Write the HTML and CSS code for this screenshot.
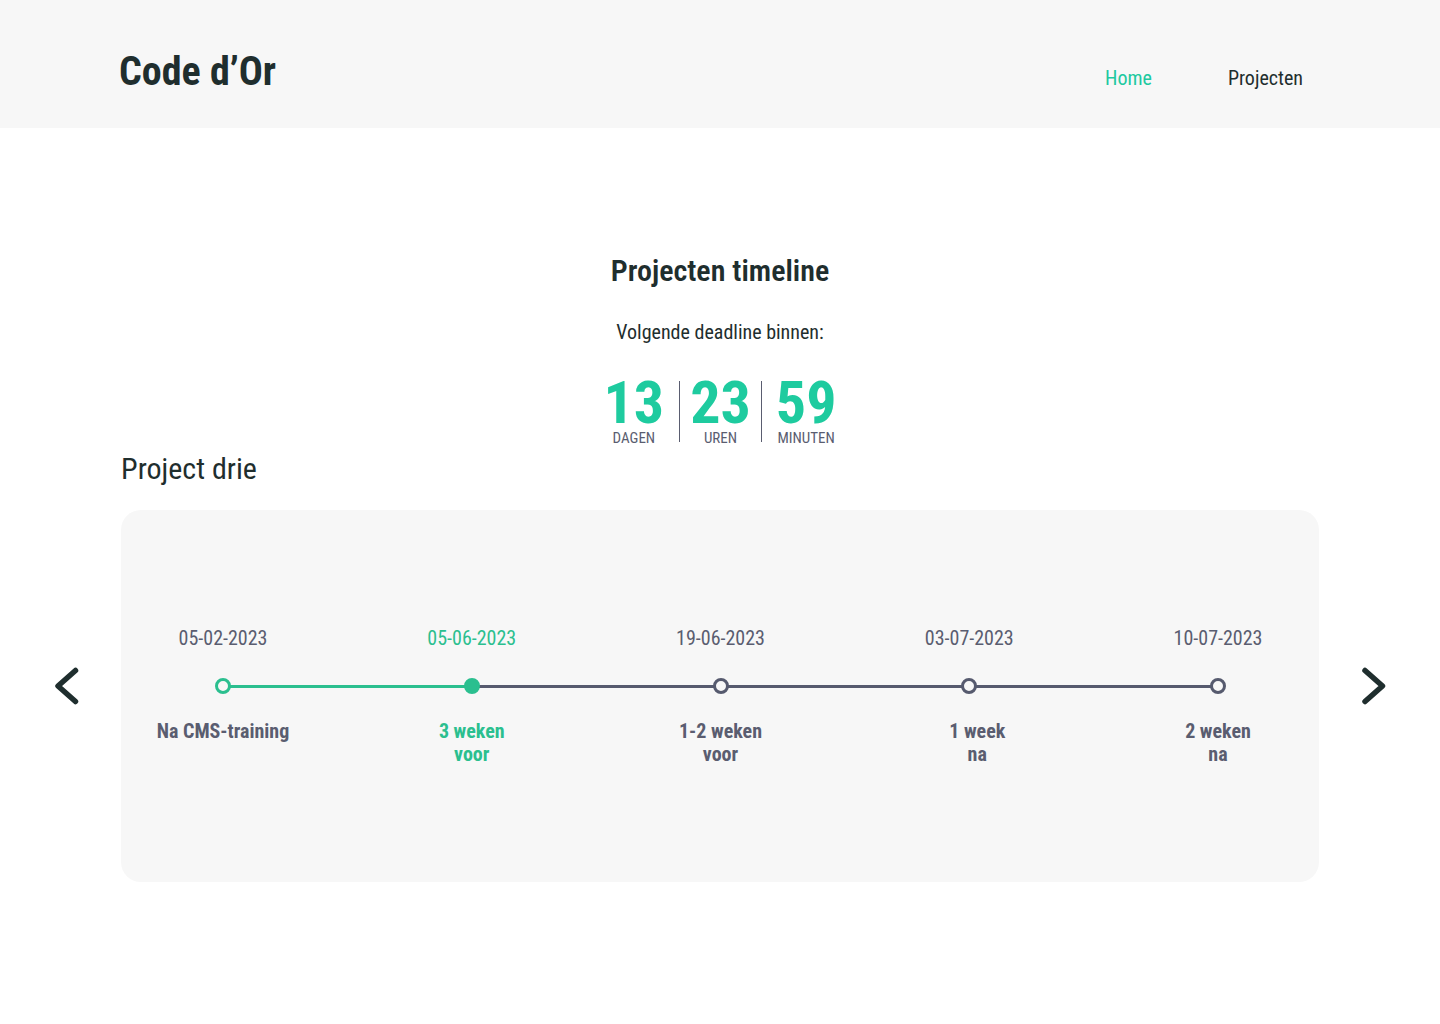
FILE: index.html
```html
<!DOCTYPE html>
<html lang="nl">
<head>
<meta charset="utf-8">
<title>Code d'Or</title>
<link rel="stylesheet" href="styles.css">
</head>
<body>
<header class="header">
  <div class="logo">Code d’Or</div>
  <nav class="nav">
    <a class="nav-link active" href="#">Home</a>
    <a class="nav-link" href="#">Projecten</a>
  </nav>
</header>
<main class="main">
  <h1 class="title">Projecten timeline</h1>
  <p class="subtitle">Volgende deadline binnen:</p>
  <div class="countdown">
    <div class="unit unit-first"><span class="num">13</span><span class="lbl">DAGEN</span></div>
    <div class="sep"></div>
    <div class="unit"><span class="num">23</span><span class="lbl">UREN</span></div>
    <div class="sep"></div>
    <div class="unit unit-last"><span class="num">59</span><span class="lbl">MINUTEN</span></div>
  </div>
  <h2 class="project">Project drie</h2>
  <div class="slider">
    <button class="arrow arrow-left" aria-label="Vorige">
      <svg width="28" height="40" viewBox="0 0 28 40"><path d="M23.5 4.5 L6 20 L23.5 35.5" fill="none" stroke="#1f2e2e" stroke-width="5.5" stroke-linecap="round" stroke-linejoin="round"/></svg>
    </button>
    <div class="card">
      <div class="timeline">
        <div class="track">
          <div class="seg done"></div>
          <div class="seg"></div>
          <div class="seg"></div>
          <div class="seg"></div>
        </div>
        <div class="step done">
          <span class="date">05-02-2023</span>
          <span class="dot"></span>
          <span class="desc">Na CMS-training</span>
        </div>
        <div class="step current">
          <span class="date">05-06-2023</span>
          <span class="dot"></span>
          <span class="desc">3 weken<br>voor</span>
        </div>
        <div class="step">
          <span class="date">19-06-2023</span>
          <span class="dot"></span>
          <span class="desc">1-2 weken<br>voor</span>
        </div>
        <div class="step">
          <span class="date">03-07-2023</span>
          <span class="dot"></span>
          <span class="desc desc-offset">1 week<br>na</span>
        </div>
        <div class="step">
          <span class="date">10-07-2023</span>
          <span class="dot"></span>
          <span class="desc">2 weken<br>na</span>
        </div>
      </div>
    </div>
    <button class="arrow arrow-right" aria-label="Volgende">
      <svg width="28" height="40" viewBox="0 0 28 40"><path d="M5 4.5 L22.5 20 L5 35.5" fill="none" stroke="#1f2e2e" stroke-width="5.5" stroke-linecap="round" stroke-linejoin="round"/></svg>
    </button>
  </div>
</main>
</body>
</html>
```
FILE: styles.css
```css
* { box-sizing: border-box; }
html, body { margin: 0; padding: 0; }
body {
  font-family: "Roboto Condensed", Roboto, sans-serif;
  font-stretch: 75%;
  background: #ffffff;
  color: #1f2e2e;
}
.header {
  height: 128px;
  background: #f7f7f7;
  display: flex;
  align-items: center;
  justify-content: space-between;
  padding: 0 137px 0 119px;
}
.logo {
  font-size: 40px;
  font-weight: 700;
  color: #1f2e2e;
  margin-top: 14px;
}
.nav { display: flex; gap: 76px; margin-top: 28px; }
.nav-link {
  font-size: 20px;
  color: #1f2e2e;
  text-decoration: none;
}
.nav-link.active { color: #20c9a0; }
.main {
  display: flex;
  flex-direction: column;
  align-items: center;
  padding-top: 125px;
}
.title {
  margin: 0;
  font-size: 30px;
  font-weight: 600;
  line-height: 36px;
}
.subtitle {
  margin: 31px 0 0;
  font-size: 20px;
  line-height: 24px;
}
.countdown {
  display: flex;
  align-items: stretch;
  margin-top: 36px;
}
.unit {
  display: flex;
  flex-direction: column;
  align-items: center;
  padding: 0 8px;
}
.unit-first { padding-right: 13px; }
.unit-last { padding-left: 12px; }
.num {
  font-size: 60px;
  font-weight: 700;
  color: #1ecb9f;
  line-height: 46px;
}
.lbl {
  font-size: 15px;
  color: #5a5d70;
  line-height: 16px;
  margin-top: 4px;
}
.sep { width: 1px; background: #5a5d70; margin: 1px 2px 4px; }
.project {
  align-self: flex-start;
  margin: 5px 0 0 121px;
  font-size: 30px;
  font-weight: 400;
  line-height: 36px;
}
.slider {
  align-self: stretch;
  display: flex;
  align-items: center;
  margin-top: 23px;
  padding: 0 52px;
}
.arrow {
  border: 0;
  background: none;
  padding: 0;
  width: 28px;
  height: 40px;
  display: flex;
  cursor: pointer;
  margin-bottom: 20px;
}
.arrow-left { margin-right: 41px; }
.arrow-right { margin-left: 41px; }
.card {
  flex: 1;
  height: 372px;
  background: #f7f7f7;
  border-radius: 20px;
  display: flex;
  align-items: center;
  padding: 0 26px 0 27px;
}
.timeline {
  position: relative;
  flex: 1;
  display: grid;
  grid-template-columns: repeat(5, 150px);
  justify-content: space-between;
}
.track {
  position: absolute;
  left: 75px;
  right: 75px;
  top: 58.5px;
  height: 3px;
  display: flex;
}
.seg { flex: 1; background: #565a6e; }
.seg.done { background: #2bbf8f; }
.step {
  position: relative;
  display: flex;
  flex-direction: column;
  align-items: center;
  text-align: center;
}
.date {
  font-size: 20px;
  line-height: 24px;
  color: #5a5d70;
}
.dot {
  width: 16px;
  height: 16px;
  border-radius: 50%;
  border: 3px solid #565a6e;
  background: #f7f7f7;
  margin-top: 28px;
  position: relative;
}
.desc {
  margin-top: 26px;
  font-size: 20px;
  font-weight: 700;
  line-height: 23px;
  color: #5a5d70;
}
.desc-offset { padding-left: 16px; }
.step.done .dot { border-color: #2bbf8f; }
.step.current .date, .step.current .desc { color: #2bbf8f; }
.step.current .dot { background: #2bbf8f; border-color: #2bbf8f; }
```
